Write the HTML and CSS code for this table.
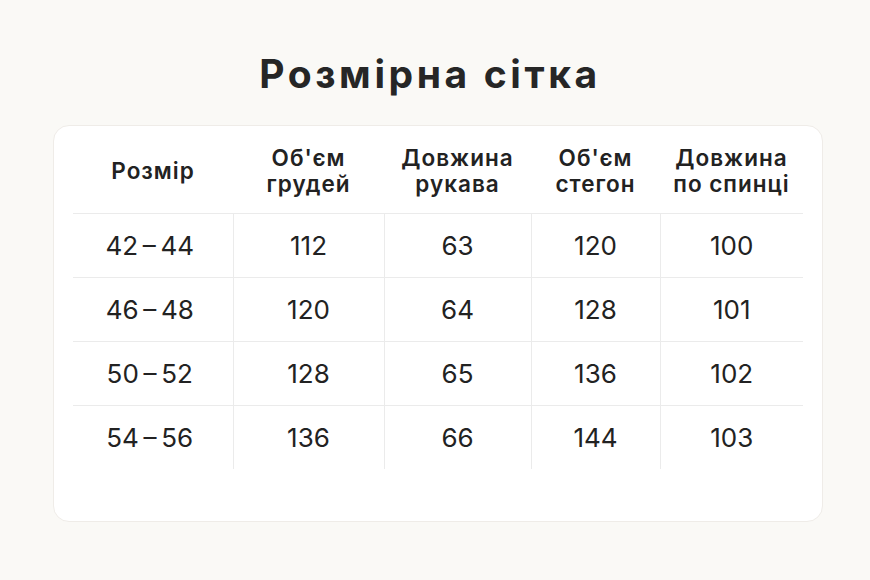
FILE: index.html
```html
<!DOCTYPE html>
<html lang="uk">
<head>
<meta charset="utf-8">
<link rel="stylesheet" href="styles.css">
</head>
<body>
<main class="page">
  <h1 class="title">Розмірна сітка</h1>
  <section class="card">
    <table class="grid">
      <colgroup>
        <col class="c1"><col class="c2"><col class="c3"><col class="c4"><col class="c5">
      </colgroup>
      <thead>
        <tr>
          <th>Розмір</th>
          <th>Об'єм<br>грудей</th>
          <th>Довжина<br>рукава</th>
          <th>Об'єм<br>стегон</th>
          <th>Довжина<br>по спинці</th>
        </tr>
      </thead>
      <tbody>
        <tr><td>42&thinsp;–&thinsp;44</td><td>112</td><td>63</td><td>120</td><td>100</td></tr>
        <tr><td>46&thinsp;–&thinsp;48</td><td>120</td><td>64</td><td>128</td><td>101</td></tr>
        <tr><td>50&thinsp;–&thinsp;52</td><td>128</td><td>65</td><td>136</td><td>102</td></tr>
        <tr><td>54&thinsp;–&thinsp;56</td><td>136</td><td>66</td><td>144</td><td>103</td></tr>
      </tbody>
    </table>
  </section>
</main>
</body>
</html>
```
FILE: styles.css
```css
* { box-sizing: border-box; }
html, body {
  margin: 0;
  background: #faf9f6;
}
body {
  font-family: "Inter", "Open Sans", sans-serif;
  color: #222222;
}
.page {
  width: 870px;
  height: 580px;
  padding-top: 50px;
  padding-left: 53px;
  display: flex;
  flex-direction: column;
  align-items: flex-start;
}
.title {
  margin: 0;
  width: 754px;
  text-align: center;
  height: 48px;
  line-height: 48px;
  font-size: 39px;
  font-weight: 700;
  letter-spacing: 3.6px;
  color: #262626;
}
.card {
  margin-top: 27px;
  width: 770px;
  height: 397px;
  background: #ffffff;
  border: 1px solid #efece8;
  border-radius: 16px;
  padding: 0 19px;
}
.grid {
  width: 730px;
  border-collapse: collapse;
  table-layout: fixed;
}
.c1 { width: 160px; }
.c2 { width: 151px; }
.c3 { width: 147px; }
.c4 { width: 129px; }
.c5 { width: 143px; }
.grid th {
  height: 87px;
  padding: 4px 0 0;
  font-size: 22.5px;
  line-height: 26px;
  font-weight: 600;
  letter-spacing: 1px;
  text-align: center;
  vertical-align: middle;
  border-bottom: 1px solid #ebebeb;
}
.grid td {
  height: 64px;
  padding: 0;
  font-size: 26px;
  font-weight: 400;
  text-align: center;
  vertical-align: middle;
  border-bottom: 1px solid #ebebeb;
  border-left: 1px solid #ebebeb;
}
.grid td:first-child { border-left: none; padding-right: 6px; }
.grid tbody tr:last-child td { border-bottom: none; }
```
